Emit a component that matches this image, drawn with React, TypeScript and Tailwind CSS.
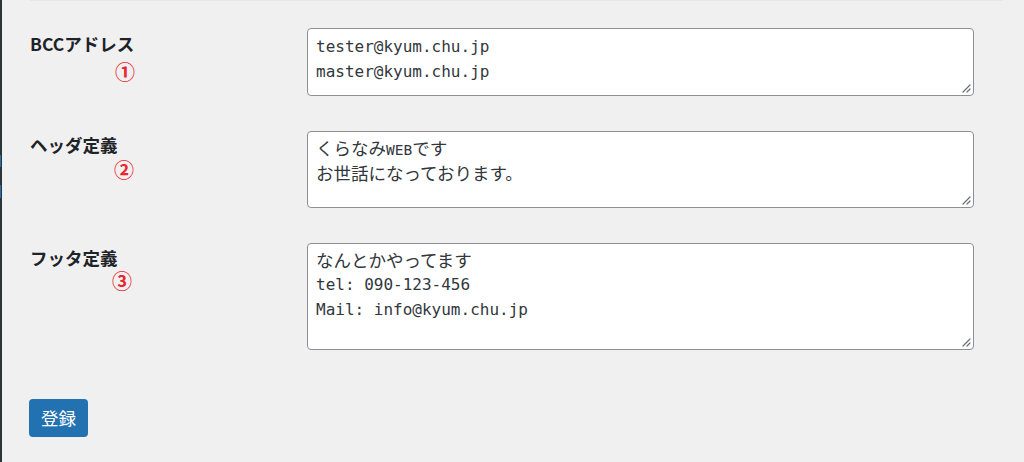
import { ReactNode } from "react";

type Seg = { text: string; kind: "ja" | "mono" | "latin" };

type Field = {
  label: string;
  mark: string;
  labelPad: string;
  markGap: string;
  markIndent: string;
  boxHeight: string;
  boxPad: string;
  lines: Seg[][];
};

const fields: Field[] = [
  {
    label: "BCCアドレス",
    mark: "①",
    labelPad: "pt-[7px]",
    markGap: "mt-[9px]",
    markIndent: "ml-[85px]",
    boxHeight: "h-[68px]",
    boxPad: "pt-[5px]",
    lines: [
      [{ text: "tester@kyum.chu.jp", kind: "mono" }],
      [{ text: "master@kyum.chu.jp", kind: "mono" }],
    ],
  },
  {
    label: "ヘッダ定義",
    mark: "②",
    labelPad: "pt-[5px]",
    markGap: "mt-[6px]",
    markIndent: "ml-[84px]",
    boxHeight: "h-[77px]",
    boxPad: "pt-[3px]",
    lines: [
      [
        { text: "くらなみ", kind: "ja" },
        { text: "WEB", kind: "latin" },
        { text: "です", kind: "ja" },
      ],
      [{ text: "お世話になっております。", kind: "ja" }],
    ],
  },
  {
    label: "フッタ定義",
    mark: "③",
    labelPad: "pt-[6px]",
    markGap: "mt-[4px]",
    markIndent: "ml-[82px]",
    boxHeight: "h-[107px]",
    boxPad: "pt-[3px]",
    lines: [
      [{ text: "なんとかやってます", kind: "ja" }],
      [{ text: "tel: 090-123-456", kind: "mono" }],
      [{ text: "Mail: info@kyum.chu.jp", kind: "mono" }],
    ],
  },
];

const segClass = {
  ja: "font-['Noto_Sans_CJK_JP',sans-serif] text-[17.5px]",
  mono: "font-['DejaVu_Sans_Mono',monospace] text-[16px]",
  latin: "font-['DejaVu_Sans_Mono',monospace] text-[14.5px] leading-none",
};

const ResizeGrip = () => (
  <svg
    className="absolute right-[2px] bottom-[2px]"
    width="9"
    height="9"
    viewBox="0 0 9 9"
  >
    <path d="M8 1 L1 8 M8 5 L5 8" stroke="#6b6f75" strokeWidth="1.2" strokeLinecap="round" />
  </svg>
);

const TextBox = ({ height, pad, children }: { height: string; pad: string; children: ReactNode }) => (
  <div
    className={`relative ${height} ${pad} pl-[8px] bg-white border border-[#8c8f94] rounded-[4px] text-[#32373c] overflow-hidden`}
  >
    {children}
    <ResizeGrip />
  </div>
);

const App = () => {
  return (
    <div className="flex w-[1024px] h-[462px] bg-[#f0f0f1] overflow-hidden">
      {/* admin menu edge */}
      <div className="w-[2px] shrink-0 flex flex-col bg-[#2c3338]">
        <div className="h-[155px]" />
        <div className="h-[12px] w-[1px] bg-[#2271b1]" />
        <div className="h-[18px]" />
        <div className="h-[13px] w-[1px] bg-[#2271b1]" />
      </div>

      <main className="pl-[28px]">
        <div className="w-[973px] border-t border-[#e6e6e7] pt-[27px]">
          <div className="grid grid-cols-[277px_667px] gap-y-[35px]">
            {fields.map((f) => (
              <div key={f.label} className="contents">
                <div className={f.labelPad}>
                  <div className="font-['Noto_Sans_CJK_JP',sans-serif] font-bold text-[17.5px] leading-none text-[#1d2327]">
                    {f.label}
                  </div>
                  <div
                    className={`${f.markGap} ${f.markIndent} font-['Noto_Sans_CJK_JP',sans-serif] font-bold text-[20px] leading-none text-[#e8262d]`}
                  >
                    {f.mark}
                  </div>
                </div>
                <TextBox height={f.boxHeight} pad={f.boxPad}>
                  {f.lines.map((line, i) => (
                    <div key={i} className="h-[25px] leading-[25px] whitespace-pre">
                      {line.map((s, j) => (
                        <span key={j} className={segClass[s.kind]}>
                          {s.text}
                        </span>
                      ))}
                    </div>
                  ))}
                </TextBox>
              </div>
            ))}
          </div>

          <button className="mt-[49px] -ml-[1px] w-[59px] h-[38px] rounded-[4px] bg-[#2271b1] text-white font-['Noto_Sans_CJK_JP',sans-serif] text-[17.5px] leading-none">
            登録
          </button>
        </div>
      </main>
    </div>
  );
};

export default App;
